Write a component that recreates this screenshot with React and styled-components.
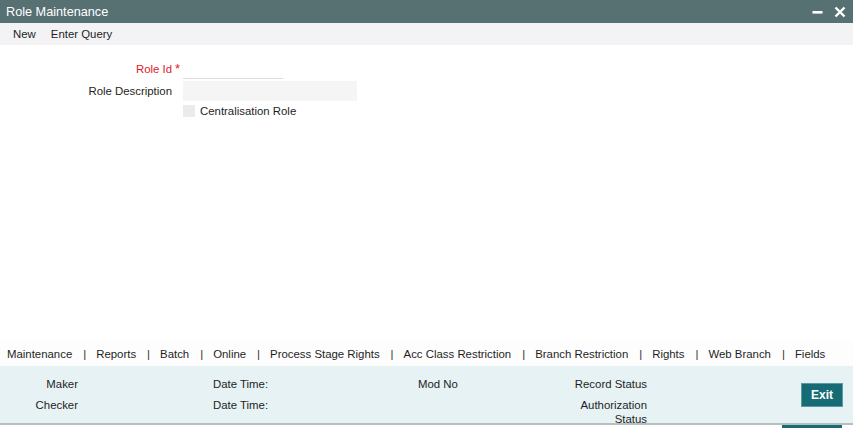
import React from 'react';
import styled, { createGlobalStyle } from 'styled-components';

const GlobalStyle = createGlobalStyle`
    html, body {
        margin: 0;
        padding: 0;
        background: #ffffff;
        font-family: "Liberation Sans", Arial, sans-serif;
        color: #1e1e1e;
    }
`;

const Page = styled.div`
    height: 100vh;
    display: flex;
    flex-direction: column;
    overflow: hidden;
`;

const TitleBar = styled.div`
    height: 23px;
    flex: none;
    background: #577072;
    color: #ffffff;
    display: flex;
    align-items: center;
    padding: 0 7px 0 6px;
`;

const Title = styled.div`
    font-size: 12.7px;
    flex: 1;
`;

const WinButton = styled.button`
    border: none;
    background: none;
    padding: 0;
    margin-left: 11px;
    width: 12px;
    height: 12px;
    display: flex;
    align-items: center;
    justify-content: center;
    cursor: pointer;
`;

const Toolbar = styled.div`
    height: 22px;
    flex: none;
    background: #f3f3f5;
    display: flex;
    align-items: center;
    padding-left: 13px;
    gap: 15px;
`;

const ToolItem = styled.span`
    font-size: 11.4px;
    color: #1e1e1e;
`;

const Main = styled.div`
    flex: 1;
    padding-top: 13px;
`;

const FormGrid = styled.div`
    display: grid;
    grid-template-columns: 172px 11px auto;
    grid-template-rows: 21px 21px 17px;
    row-gap: 1px;
    align-items: center;
    font-size: 11.4px;
`;

const Label = styled.div`
    text-align: right;
    color: ${props => (props.required ? '#e0202a' : '#1e1e1e')};
`;

const Marker = styled.div`
    color: #e0202a;
    font-size: 13px;
    padding-left: 3px;
    line-height: 13px;
`;

const TextInput = styled.div`
    height: ${props => (props.underline ? '19px' : '20px')};
    width: ${props => props.width}px;
    background: ${props => (props.underline ? '#ffffff' : '#f5f5f5')};
    border-bottom: ${props => (props.underline ? '1px solid #dcdcdc' : 'none')};
`;

const CheckRow = styled.label`
    display: flex;
    align-items: center;
    gap: 5px;
`;

const CheckBox = styled.span`
    width: 12px;
    height: 12px;
    background: #ebebeb;
`;

const Tabs = styled.div`
    height: 25px;
    flex: none;
    background: #fdfdfd;
    display: flex;
    align-items: center;
    padding-left: 7px;
    font-size: 11.4px;
`;

const Tab = styled.span`
    color: #1e1e1e;
`;

const Sep = styled.span`
    margin: 0 10px 0 11px;
    color: #333;
`;

const Footer = styled.div`
    height: 57px;
    flex: none;
    background: #e6f2f4;
    display: flex;
    font-size: 11.4px;
    border-bottom: 2px solid #b6c0c1;
`;

const Col = styled.div`
    width: ${props => props.width}px;
    margin-left: ${props => props.offset || 0}px;
    padding-top: 11px;
    display: flex;
    flex-direction: column;
    gap: 7px;
    text-align: ${props => props.align || 'left'};
    line-height: 14px;
`;

const ExitCol = styled.div`
    margin-left: auto;
    padding: 17px 10px 0 0;
`;

const ExitButton = styled.button`
    width: 42px;
    height: 24px;
    background: #176b74;
    border: 1px solid #5b9aa1;
    color: #ffffff;
    font-family: "Liberation Sans", Arial, sans-serif;
    font-weight: bold;
    font-size: 12px;
    padding: 0;
    cursor: pointer;
`;

const BottomStrip = styled.div`
    height: 3px;
    flex: none;
    display: flex;
    justify-content: flex-end;
    padding-right: 11px;
`;

const CutButton = styled.div`
    width: 60px;
    background: #176b74;
`;

const tabs = [
    'Maintenance',
    'Reports',
    'Batch',
    'Online',
    'Process Stage Rights',
    'Acc Class Restriction',
    'Branch Restriction',
    'Rights',
    'Web Branch',
    'Fields',
];

const App = () => {
    return (
        <Page>
            <GlobalStyle />
            <TitleBar>
                <Title>Role Maintenance</Title>
                <WinButton aria-label="minimize">
                    <svg width="11" height="12" viewBox="0 0 11 12">
                        <rect x="0.5" y="5" width="10" height="2.6" fill="#fff" />
                    </svg>
                </WinButton>
                <WinButton aria-label="close">
                    <svg width="12" height="12" viewBox="0 0 12 12">
                        <path d="M1.5 1.5 L10.5 10.5 M10.5 1.5 L1.5 10.5" stroke="#fff" strokeWidth="2.4" />
                    </svg>
                </WinButton>
            </TitleBar>
            <Toolbar>
                <ToolItem>New</ToolItem>
                <ToolItem>Enter Query</ToolItem>
            </Toolbar>
            <Main>
                <FormGrid>
                    <Label required>Role Id</Label>
                    <Marker>*</Marker>
                    <TextInput underline width={100} />
                    <Label>Role Description</Label>
                    <span />
                    <TextInput width={174} />
                    <span />
                    <span />
                    <CheckRow>
                        <CheckBox />
                        Centralisation Role
                    </CheckRow>
                </FormGrid>
            </Main>
            <Tabs>
                {tabs.map((t, i) => (
                    <React.Fragment key={t}>
                        {i > 0 && <Sep>|</Sep>}
                        <Tab>{t}</Tab>
                    </React.Fragment>
                ))}
            </Tabs>
            <Footer>
                <Col width={78} align="right">
                    <span>Maker</span>
                    <span>Checker</span>
                </Col>
                <Col width={205} offset={135}>
                    <span>Date Time:</span>
                    <span>Date Time:</span>
                </Col>
                <Col width={82}>
                    <span>Mod No</span>
                </Col>
                <Col width={147} align="right">
                    <span>Record Status</span>
                    <span>Authorization<br />Status</span>
                </Col>
                <ExitCol>
                    <ExitButton>Exit</ExitButton>
                </ExitCol>
            </Footer>
            <BottomStrip>
                <CutButton />
            </BottomStrip>
        </Page>
    );
};

export default App;
